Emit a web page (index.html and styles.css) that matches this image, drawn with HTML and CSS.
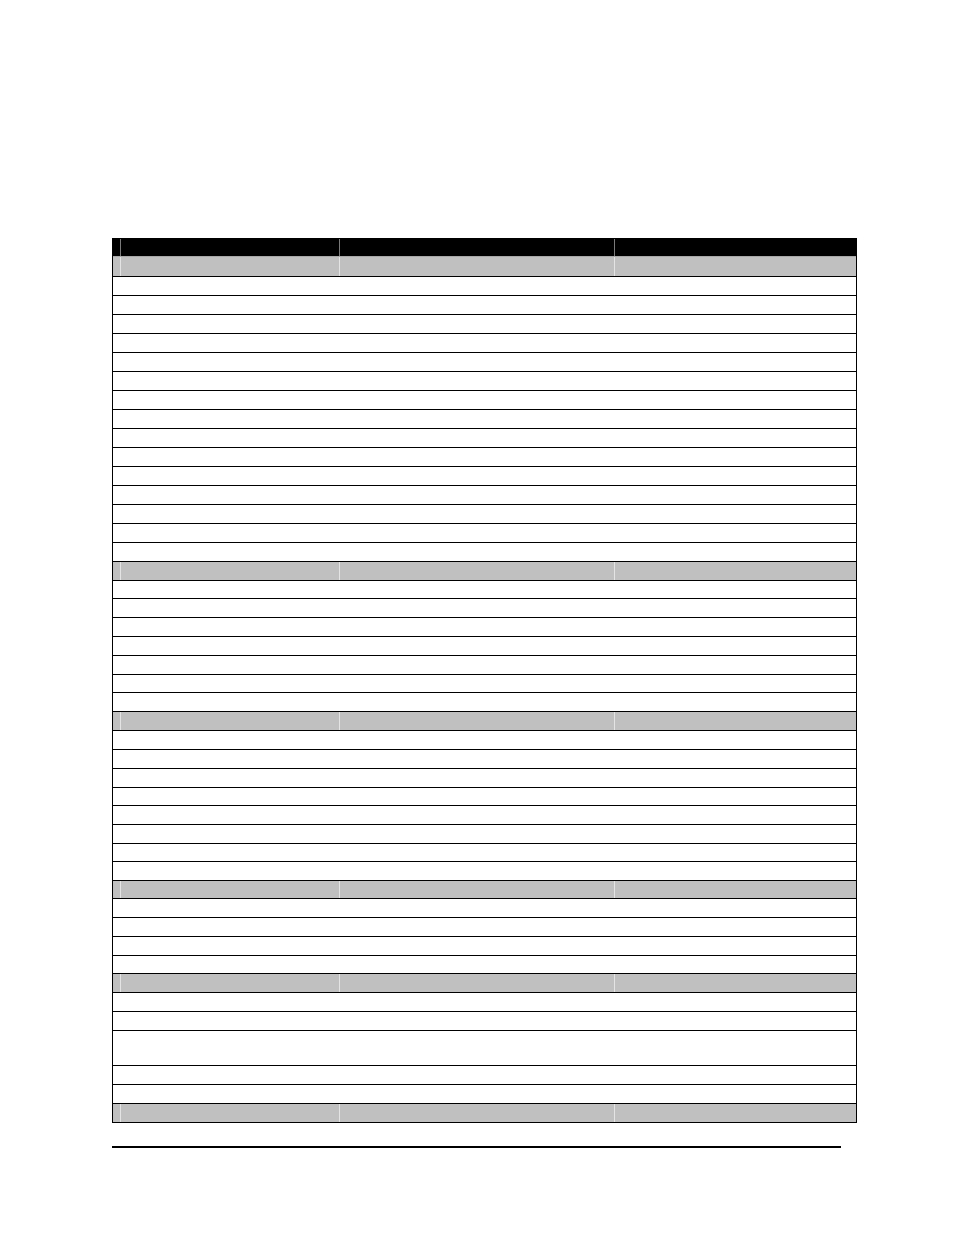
FILE: index.html
```html
<!DOCTYPE html>
<html lang="en">
<head>
<meta charset="utf-8">
<title>Table</title>
<link rel="stylesheet" href="styles.css">
</head>
<body>
<div class="page">
  <div class="table">
    <div class="row head"><div class="c"></div><div class="c"></div><div class="c"></div><div class="c"></div></div>
    <div class="row band first"><div class="c"></div><div class="c"></div><div class="c"></div><div class="c"></div></div>
    <div class="row"></div>
    <div class="row"></div>
    <div class="row"></div>
    <div class="row"></div>
    <div class="row"></div>
    <div class="row"></div>
    <div class="row"></div>
    <div class="row"></div>
    <div class="row"></div>
    <div class="row"></div>
    <div class="row"></div>
    <div class="row"></div>
    <div class="row"></div>
    <div class="row"></div>
    <div class="row"></div>
    <div class="row band"><div class="c"></div><div class="c"></div><div class="c"></div><div class="c"></div></div>
    <div class="row h18"></div>
    <div class="row"></div>
    <div class="row"></div>
    <div class="row"></div>
    <div class="row"></div>
    <div class="row h18"></div>
    <div class="row"></div>
    <div class="row band"><div class="c"></div><div class="c"></div><div class="c"></div><div class="c"></div></div>
    <div class="row"></div>
    <div class="row"></div>
    <div class="row"></div>
    <div class="row h18"></div>
    <div class="row"></div>
    <div class="row"></div>
    <div class="row h18"></div>
    <div class="row"></div>
    <div class="row band h18"><div class="c"></div><div class="c"></div><div class="c"></div><div class="c"></div></div>
    <div class="row"></div>
    <div class="row"></div>
    <div class="row"></div>
    <div class="row h18"></div>
    <div class="row band"><div class="c"></div><div class="c"></div><div class="c"></div><div class="c"></div></div>
    <div class="row"></div>
    <div class="row"></div>
    <div class="row tall"></div>
    <div class="row"></div>
    <div class="row"></div>
    <div class="row band"><div class="c"></div><div class="c"></div><div class="c"></div><div class="c"></div></div>
  </div>
  <div class="footer-rule"></div>
</div>
</body>
</html>
```
FILE: styles.css
```css
html, body {
  margin: 0;
  padding: 0;
  background: #ffffff;
  font-family: "Liberation Sans", Arial, sans-serif;
}

.page {
  padding-top: 238px;
  padding-left: 112px;
}

.table {
  width: 745px;
  box-sizing: border-box;
  border-left: 1px solid #000000;
  border-right: 1px solid #000000;
  display: flex;
  flex-direction: column;
}

.row {
  box-sizing: border-box;
  height: 19px;
  border-bottom: 1px solid #000000;
  display: grid;
  grid-template-columns: 8px 219px 275px 1fr;
}

.row.h18 {
  height: 18px;
}

.row.tall {
  height: 35px;
}

.row.first {
  height: 20px;
}

.head {
  background: #000000;
  border-bottom-color: #a8a8a8;
}

.head .c {
  margin-top: 1px;
}

.head .c:not(:last-child) {
  border-right: 1px solid #7a7a7a;
}

.band {
  background: #c0c0c0;
}

.band .c:not(:last-child) {
  border-right: 1px solid #e4e4e4;
}

.footer-rule {
  margin-top: 23px;
  width: 729px;
  height: 2px;
  background: #000000;
}
```
